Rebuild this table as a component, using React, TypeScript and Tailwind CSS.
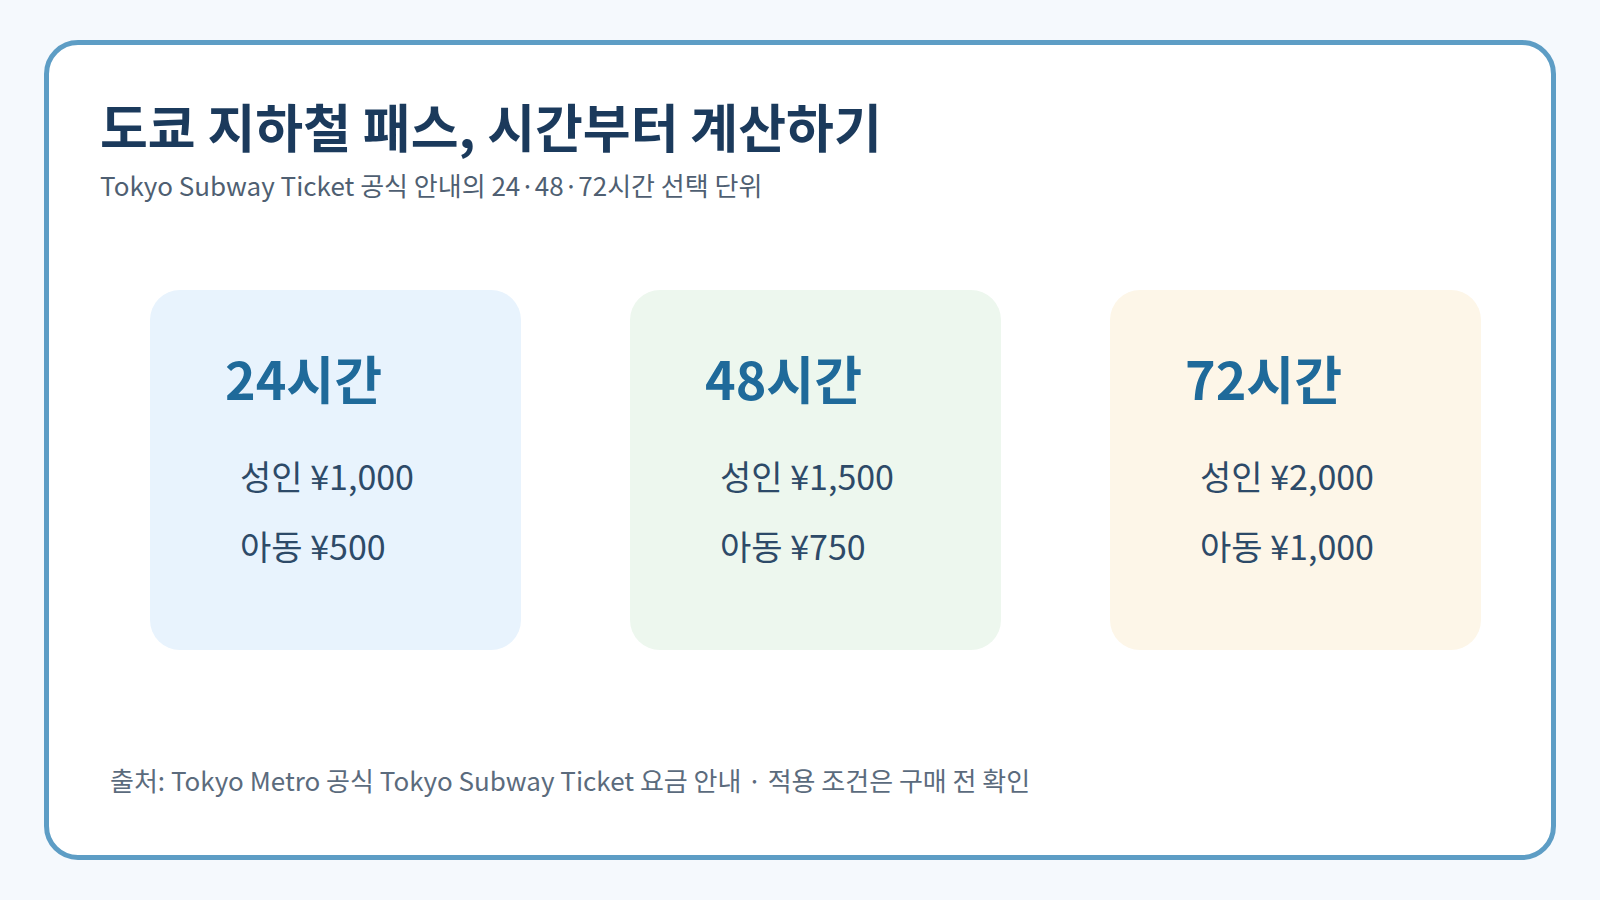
import React from 'react'

const passes = [
  { hours: '24시간', adult: '¥1,000', child: '¥500', bg: 'bg-[#e8f3fd]' },
  { hours: '48시간', adult: '¥1,500', child: '¥750', bg: 'bg-[#edf7ee]' },
  { hours: '72시간', adult: '¥2,000', child: '¥1,000', bg: 'bg-[#fdf6e8]' },
]

export default function App() {
  return (
    <div
      className="w-[1600px] h-[900px] bg-[#f5f9fd] px-[44px] py-[40px]"
      style={{ fontFamily: '"Noto Sans CJK KR", "Noto Sans", sans-serif' }}
    >
      <div className="h-full rounded-[34px] border-[5px] border-[#5d9dc5] bg-white">
        <div className="pl-[51px] pt-[50px]">
          <h1 className="text-[52px] leading-[62px] font-bold text-[#1b3a5c]">
            도쿄 지하철 패스, 시간부터 계산하기
          </h1>
          <p className="mt-[11px] text-[26px] leading-[34px] text-[#4f5f72]">
            Tokyo Subway Ticket 공식 안내의 24·48·72시간 선택 단위
          </p>
        </div>

        {/* pass cards */}
        <div className="mt-[88px] pl-[101px] flex gap-[109px]">
          {passes.map((p) => (
            <div key={p.hours} className={`w-[371px] h-[360px] rounded-[30px] ${p.bg} pt-[57px]`}>
              <div className="pl-[75px] text-[52px] leading-[62px] font-bold text-[#1f6a9a]">{p.hours}</div>
              <div className="pl-[90px] mt-[45px] text-[34px] leading-[44px] text-[#2d4a68]">성인 {p.adult}</div>
              <div className="pl-[90px] mt-[26px] text-[34px] leading-[44px] text-[#2d4a68]">아동 {p.child}</div>
            </div>
          ))}
        </div>

        <p className="mt-[113px] pl-[61px] text-[26px] leading-[34px] text-[#5b6b7d]">
          출처: Tokyo Metro 공식 Tokyo Subway Ticket 요금 안내 · 적용 조건은 구매 전 확인
        </p>
      </div>
    </div>
  )
}
